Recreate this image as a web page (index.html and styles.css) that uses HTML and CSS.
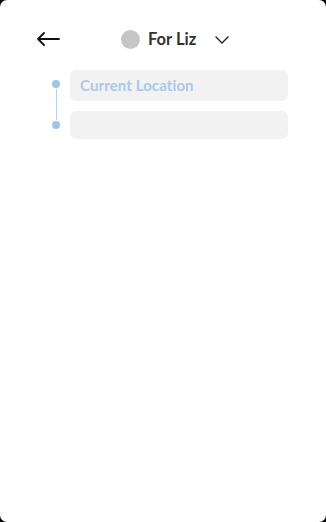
FILE: index.html
```html
<!DOCTYPE html>
<html>
<head>
<meta charset="utf-8">
<link rel="stylesheet" href="styles.css">
</head>
<body>
<div class="card">
  <header class="top">
    <button class="back" aria-label="Back">
      <svg width="24" height="14" viewBox="0 0 24 14"><path d="M23 7H2M8 1L2 7l6 6" fill="none" stroke="#111" stroke-width="1.8" stroke-linecap="round" stroke-linejoin="round"/></svg>
    </button>
    <div class="who">
      <span class="avatar"></span>
      <span class="name">For Liz</span>
      <svg class="chev" width="14" height="8" viewBox="0 0 14 8"><path d="M1 1l6 6 6-6" fill="none" stroke="#222" stroke-width="1.4" stroke-linecap="round" stroke-linejoin="round"/></svg>
    </div>
  </header>
  <div class="route">
    <div class="rail">
      <span class="dot"></span>
      <span class="line"></span>
      <span class="dot"></span>
    </div>
    <div class="fields">
      <div class="field first">Current Location</div>
      <div class="field second"></div>
    </div>
  </div>
</div>
</body>
</html>
```
FILE: styles.css
```css
html, body { margin: 0; padding: 0; background: #000; }
body { width: 326px; height: 522px; font-family: Lato, "Open Sans", sans-serif; }
.card {
  width: 326px; height: 522px; background: #fff; border-radius: 7px;
  overflow: hidden;
}
.top { display: flex; align-items: center; padding: 29px 0 0 36px; }
.back { border: 0; background: none; padding: 0; width: 24px; height: 14px; display: flex; }
.who { display: flex; align-items: center; margin-left: 61px; }
.avatar { width: 19px; height: 19px; border-radius: 50%; background: #c6c6c6; }
.name { margin-left: 8px; font-size: 16.5px; font-weight: 700; color: #333; }
.chev { margin-left: 19px; margin-top: 1px; }
.route { display: flex; margin-top: 21px; padding-left: 52px; }
.rail { width: 8px; display: flex; flex-direction: column; align-items: center; padding-top: 10px; }
.dot { width: 8px; height: 8px; border-radius: 50%; background: #9ec3ec; flex: none; }
.line { width: 1px; height: 31px; background: #b5d1f0; margin: 1px 0; }
.fields { margin-left: 10px; display: flex; flex-direction: column; gap: 10px; }
.field { width: 218px; background: #f2f2f2; border-radius: 6px; box-sizing: border-box; }
.first { height: 31px; padding-left: 10px; font-size: 15px; font-weight: 700; color: #a9c9ec; line-height: 31px; letter-spacing: 0.1px; }
.second { height: 28px; }
```
